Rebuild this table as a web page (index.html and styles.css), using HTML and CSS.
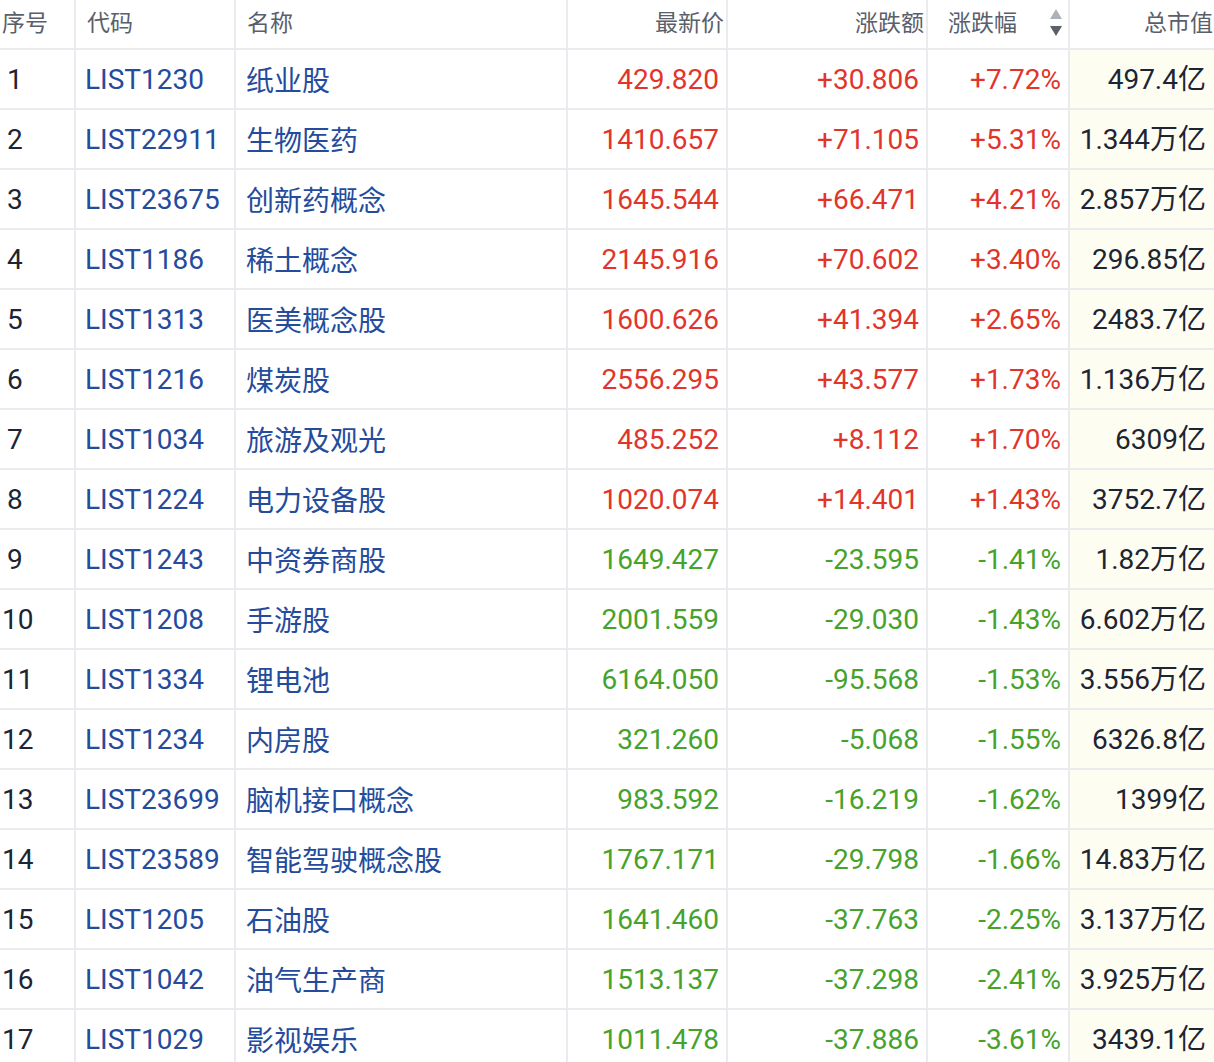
FILE: index.html
```html
<!DOCTYPE html>
<html lang="zh-CN">
<head>
<meta charset="utf-8">
<title>板块行情</title>
<link rel="stylesheet" href="styles.css">
</head>
<body>
<table class="quotes">
  <colgroup>
    <col class="c-idx"><col class="c-code"><col class="c-name"><col class="c-price"><col class="c-chg"><col class="c-pct"><col class="c-cap">
  </colgroup>
  <thead>
    <tr>
      <th class="h-left h-idx">序号</th>
      <th class="h-left">代码</th>
      <th class="h-left">名称</th>
      <th class="h-right">最新价</th>
      <th class="h-right">涨跌额</th>
      <th class="h-sort"><div class="sort-wrap"><span>涨跌幅</span><span class="arrows"><i class="up"></i><i class="down"></i></span></div></th>
      <th class="h-right h-last">总市值</th>
    </tr>
  </thead>
  <tbody>
    <tr class="rise"><td class="idx one">1</td><td class="code">LIST1230</td><td class="name">纸业股</td><td class="num">429.820</td><td class="num">+30.806</td><td class="num">+7.72%</td><td class="cap">497.4亿</td></tr>
    <tr class="rise"><td class="idx one">2</td><td class="code">LIST22911</td><td class="name">生物医药</td><td class="num">1410.657</td><td class="num">+71.105</td><td class="num">+5.31%</td><td class="cap">1.344万亿</td></tr>
    <tr class="rise"><td class="idx one">3</td><td class="code">LIST23675</td><td class="name">创新药概念</td><td class="num">1645.544</td><td class="num">+66.471</td><td class="num">+4.21%</td><td class="cap">2.857万亿</td></tr>
    <tr class="rise"><td class="idx one">4</td><td class="code">LIST1186</td><td class="name">稀土概念</td><td class="num">2145.916</td><td class="num">+70.602</td><td class="num">+3.40%</td><td class="cap">296.85亿</td></tr>
    <tr class="rise"><td class="idx one">5</td><td class="code">LIST1313</td><td class="name">医美概念股</td><td class="num">1600.626</td><td class="num">+41.394</td><td class="num">+2.65%</td><td class="cap">2483.7亿</td></tr>
    <tr class="rise"><td class="idx one">6</td><td class="code">LIST1216</td><td class="name">煤炭股</td><td class="num">2556.295</td><td class="num">+43.577</td><td class="num">+1.73%</td><td class="cap">1.136万亿</td></tr>
    <tr class="rise"><td class="idx one">7</td><td class="code">LIST1034</td><td class="name">旅游及观光</td><td class="num">485.252</td><td class="num">+8.112</td><td class="num">+1.70%</td><td class="cap">6309亿</td></tr>
    <tr class="rise"><td class="idx one">8</td><td class="code">LIST1224</td><td class="name">电力设备股</td><td class="num">1020.074</td><td class="num">+14.401</td><td class="num">+1.43%</td><td class="cap">3752.7亿</td></tr>
    <tr class="fall"><td class="idx one">9</td><td class="code">LIST1243</td><td class="name">中资券商股</td><td class="num">1649.427</td><td class="num">-23.595</td><td class="num">-1.41%</td><td class="cap">1.82万亿</td></tr>
    <tr class="fall"><td class="idx">10</td><td class="code">LIST1208</td><td class="name">手游股</td><td class="num">2001.559</td><td class="num">-29.030</td><td class="num">-1.43%</td><td class="cap">6.602万亿</td></tr>
    <tr class="fall"><td class="idx">11</td><td class="code">LIST1334</td><td class="name">锂电池</td><td class="num">6164.050</td><td class="num">-95.568</td><td class="num">-1.53%</td><td class="cap">3.556万亿</td></tr>
    <tr class="fall"><td class="idx">12</td><td class="code">LIST1234</td><td class="name">内房股</td><td class="num">321.260</td><td class="num">-5.068</td><td class="num">-1.55%</td><td class="cap">6326.8亿</td></tr>
    <tr class="fall"><td class="idx">13</td><td class="code">LIST23699</td><td class="name">脑机接口概念</td><td class="num">983.592</td><td class="num">-16.219</td><td class="num">-1.62%</td><td class="cap">1399亿</td></tr>
    <tr class="fall"><td class="idx">14</td><td class="code">LIST23589</td><td class="name">智能驾驶概念股</td><td class="num">1767.171</td><td class="num">-29.798</td><td class="num">-1.66%</td><td class="cap">14.83万亿</td></tr>
    <tr class="fall"><td class="idx">15</td><td class="code">LIST1205</td><td class="name">石油股</td><td class="num">1641.460</td><td class="num">-37.763</td><td class="num">-2.25%</td><td class="cap">3.137万亿</td></tr>
    <tr class="fall"><td class="idx">16</td><td class="code">LIST1042</td><td class="name">油气生产商</td><td class="num">1513.137</td><td class="num">-37.298</td><td class="num">-2.41%</td><td class="cap">3.925万亿</td></tr>
    <tr class="fall"><td class="idx">17</td><td class="code">LIST1029</td><td class="name">影视娱乐</td><td class="num">1011.478</td><td class="num">-37.886</td><td class="num">-3.61%</td><td class="cap">3439.1亿</td></tr>
  </tbody>
</table>
</body>
</html>
```
FILE: styles.css
```css
html, body {
  margin: 0;
  padding: 0;
  background: #ffffff;
}

body {
  overflow: hidden;
  font-family: Roboto, "Noto Sans CJK SC", sans-serif;
}

.quotes {
  width: 1214px;
  table-layout: fixed;
  border-collapse: separate;
  border-spacing: 0;
}

.c-idx { width: 76px; }
.c-code { width: 160px; }
.c-name { width: 332px; }
.c-price { width: 160px; }
.c-chg { width: 200px; }
.c-pct { width: 142px; }
.c-cap { width: 144px; }

.quotes th,
.quotes td {
  box-sizing: border-box;
  border-right: 2px solid #e9ebee;
  border-bottom: 2px solid #e9ebee;
  padding: 0;
  white-space: nowrap;
  overflow: hidden;
}

.quotes th:last-child,
.quotes td:last-child {
  border-right: none;
}

/* header */
.quotes th {
  height: 50px;
  vertical-align: top;
  font-family: "Noto Sans CJK SC", sans-serif;
  font-weight: 400;
  font-size: 23px;
  line-height: 42px;
  color: #59606b;
}

.quotes .h-left { text-align: left; padding-left: 11px; }
.quotes .h-idx { padding-left: 2px; }
.quotes .h-right { text-align: right; padding-right: 2px; }
.quotes .h-last { padding-right: 1px; }

.sort-wrap {
  display: flex;
  align-items: center;
  justify-content: space-between;
  padding: 0 6px 0 20px;
  height: 42px;
}

.arrows {
  display: flex;
  flex-direction: column;
  gap: 7px;
  padding-top: 2px;
}

.arrows i {
  display: block;
  width: 0;
  height: 0;
  border-left: 6px solid transparent;
  border-right: 6px solid transparent;
}

.arrows .up {
  border-bottom: 10px solid #aeb2b8;
}

.arrows .down {
  border-top: 10px solid #5a6069;
}

/* body */
.quotes td {
  height: 60px;
  vertical-align: middle;
  font-size: 28px;
  font-weight: 400;
  line-height: 34px;
  padding-top: 2px;
  color: #1d2433;
}

.quotes td.idx { padding-left: 2px; }
.quotes td.one { padding-left: 7px; }

.quotes td.code,
.quotes td.name {
  color: #244b9c;
}

.quotes td.code { padding-left: 9px; }
.quotes td.name {
  padding-left: 10px;
  padding-top: 0;
  font-family: "Noto Sans CJK SC", sans-serif;
}

.quotes td.num {
  text-align: right;
  padding-right: 7px;
}

.quotes .rise .num { color: #e1352c; }
.quotes .fall .num { color: #47a22c; }

.quotes td.cap {
  text-align: right;
  padding-right: 8px;
  background: #fdfdf1;
}
```
